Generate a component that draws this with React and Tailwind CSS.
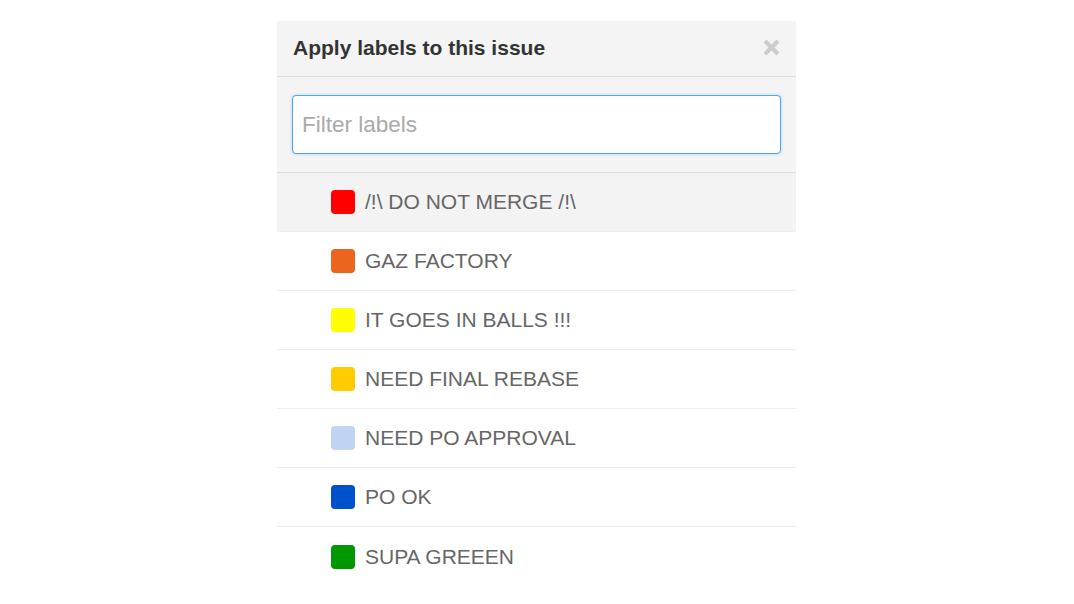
import React from "react";

const labels = [
  { name: "/!\\ DO NOT MERGE /!\\", color: "#ff0000", active: true },
  { name: "GAZ FACTORY", color: "#eb6420" },
  { name: "IT GOES IN BALLS !!!", color: "#ffff00" },
  { name: "NEED FINAL REBASE", color: "#fecc00" },
  { name: "NEED PO APPROVAL", color: "#bfd4f2" },
  { name: "PO OK", color: "#0052cc" },
  { name: "SUPA GREEEN", color: "#009800" },
];

export default function App() {
  return (
    <div className="w-[1074px] h-[604px] bg-white overflow-hidden" style={{ fontFamily: '"Liberation Sans", Arial, sans-serif' }}>
      <div className="ml-[277px] mt-[21px] w-[519px] bg-white">
        <div className="h-[56px] bg-[#f4f4f4] border-b border-[#dddddd] flex items-center justify-between pl-[16px] pr-[16px]">
          <span className="text-[21px] font-bold text-[#333333] mt-[-2px]">Apply labels to this issue</span>
          <svg width="17" height="17" viewBox="0 0 17 17" className="mt-[-2px]">
            <path d="M2 2 L15 15 M15 2 L2 15" stroke="#cccccc" strokeWidth="4" strokeLinecap="butt" />
          </svg>
        </div>
        <div className="bg-[#f4f4f4] border-b border-[#dddddd] px-[15px] py-[18px]">
          <input
            className="w-full h-[59px] bg-white border border-[#51a7e8] rounded-[4px] px-[9px] text-[22.5px] text-[#333] placeholder:text-[#aaaaaa] outline-none shadow-[0_0_3px_rgba(81,167,232,0.5)]"
            placeholder="Filter labels"
            style={{ fontFamily: '"Liberation Sans", Arial, sans-serif' }}
          />
        </div>
        {labels.map((l, i) => (
          <div
            key={i}
            className={`h-[59px] flex items-center pl-[54px] ${i < labels.length - 1 ? "border-b border-[#eeeeee]" : ""} ${l.active ? "bg-[#f3f3f3]" : "bg-white"}`}
          >
            <span className="w-[24px] h-[24px] rounded-[4px] mr-[10px] shrink-0" style={{ backgroundColor: l.color }} />
            <span className="text-[21px] text-[#666666]">{l.name}</span>
          </div>
        ))}
      </div>
    </div>
  );
}
